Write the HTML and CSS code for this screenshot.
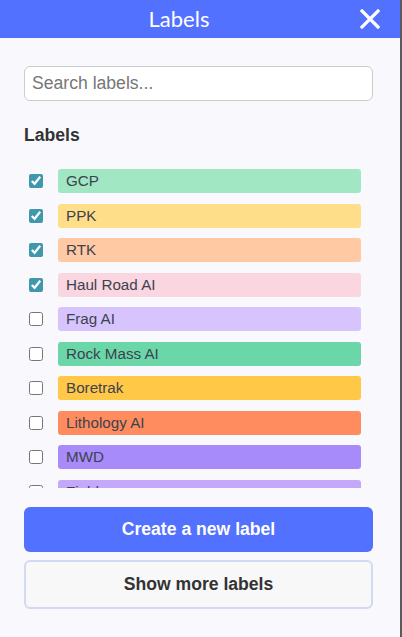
FILE: index.html
```html
<!DOCTYPE html>
<html lang="en">
<head>
<meta charset="utf-8">
<title>Labels</title>
<link rel="stylesheet" href="styles.css">
</head>
<body>
<div class="panel">
  <header class="header">
    <h1 class="title">Labels</h1>
    <button class="close" aria-label="Close">
      <svg width="20" height="20" viewBox="0 0 20 20"><path d="M2 2 L18 18 M18 2 L2 18" stroke="#fff" stroke-width="3.2" stroke-linecap="square" fill="none"/></svg>
    </button>
  </header>
  <div class="content">
    <input class="search" type="text" placeholder="Search labels...">
    <h2 class="heading">Labels</h2>
    <ul class="list">
      <li class="row"><input type="checkbox" class="check" checked><span class="tag tag-gcp">GCP</span></li>
      <li class="row"><input type="checkbox" class="check" checked><span class="tag tag-ppk">PPK</span></li>
      <li class="row"><input type="checkbox" class="check" checked><span class="tag tag-rtk">RTK</span></li>
      <li class="row"><input type="checkbox" class="check" checked><span class="tag tag-haul">Haul Road AI</span></li>
      <li class="row"><input type="checkbox" class="check"><span class="tag tag-frag">Frag AI</span></li>
      <li class="row"><input type="checkbox" class="check"><span class="tag tag-rock">Rock Mass AI</span></li>
      <li class="row"><input type="checkbox" class="check"><span class="tag tag-bore">Boretrak</span></li>
      <li class="row"><input type="checkbox" class="check"><span class="tag tag-lith">Lithology AI</span></li>
      <li class="row"><input type="checkbox" class="check"><span class="tag tag-mwd">MWD</span></li>
      <li class="row"><input type="checkbox" class="check"><span class="tag tag-field">Field</span></li>
    </ul>
    <button class="btn btn-primary">Create a new label</button>
    <button class="btn btn-secondary">Show more labels</button>
  </div>
</div>
</body>
</html>
```
FILE: styles.css
```css
* { box-sizing: border-box; }
html, body { margin: 0; padding: 0; }
body {
  background: #5a5a5a;
  font-family: "Liberation Sans", Arial, sans-serif;
  width: 402px;
  height: 637px;
  overflow: hidden;
}
.panel {
  width: 400px;
  height: 637px;
  background: #f9f9fd;
  display: flex;
  flex-direction: column;
}
.header {
  height: 38px;
  background: #5271ff;
  display: flex;
  align-items: center;
  padding: 0 20px 0 0;
  flex-shrink: 0;
}
.title {
  flex: 1;
  margin: 0 2px 0 0;
  text-align: center;
  color: #fff;
  font-family: Lato, "Open Sans", sans-serif;
  font-weight: 400;
  font-size: 22px;
  line-height: 38px;
}
.close {
  width: 20px;
  height: 20px;
  padding: 0;
  border: 0;
  background: none;
  display: flex;
}
.content {
  padding: 28px 27px 0 24px;
  display: flex;
  flex-direction: column;
}
.search {
  height: 35px;
  width: 100%;
  border: 1px solid #cccccc;
  border-radius: 6px;
  background: #fff;
  padding: 0 7px;
  font-family: "Liberation Sans", Arial, sans-serif;
  font-size: 17.6px;
  color: #333;
  outline: none;
}
.search::placeholder { color: #777; }
.heading {
  margin: 24px 0 0 0;
  font-size: 17.6px;
  line-height: 20px;
  font-weight: 700;
  color: #333;
}
.list {
  list-style: none;
  margin: 24px 0 0 0;
  padding: 0 12px 0 5px;
  height: 319px;
  overflow: hidden;
  display: flex;
  flex-direction: column;
  gap: 10.5px;
}
.row {
  display: flex;
  align-items: center;
  height: 24px;
  flex-shrink: 0;
  gap: 15px;
}
.check {
  width: 14px;
  height: 14px;
  margin: 0;
  accent-color: #3f98ab;
  flex-shrink: 0;
}
.tag {
  flex: 1;
  height: 24px;
  border-radius: 3px;
  padding-left: 8px;
  font-size: 15.2px;
  line-height: 24px;
  color: #3d4250;
}
.tag-gcp { background: #a2e7c4; }
.tag-ppk { background: #ffde89; }
.tag-rtk { background: #ffc9a3; }
.tag-haul { background: #f9d6e0; }
.tag-frag { background: #d8c4fc; }
.tag-rock { background: #6bd6a7; }
.tag-bore { background: #ffc847; }
.tag-lith { background: #ff8c5e; }
.tag-mwd { background: #a78bfa; }
.tag-field { background: #c4a8f9; }
.btn {
  width: 100%;
  border-radius: 6px;
  font-family: "Liberation Sans", Arial, sans-serif;
  font-size: 17.6px;
  font-weight: 700;
  cursor: pointer;
}
.btn-primary {
  margin-top: 19px;
  height: 45px;
  background: #5271ff;
  color: #fff;
  border: 0;
}
.btn-secondary {
  margin-top: 8px;
  height: 49px;
  background: #f8f8f8;
  color: #333;
  border: 2px solid #d3d8f5;
}
```
